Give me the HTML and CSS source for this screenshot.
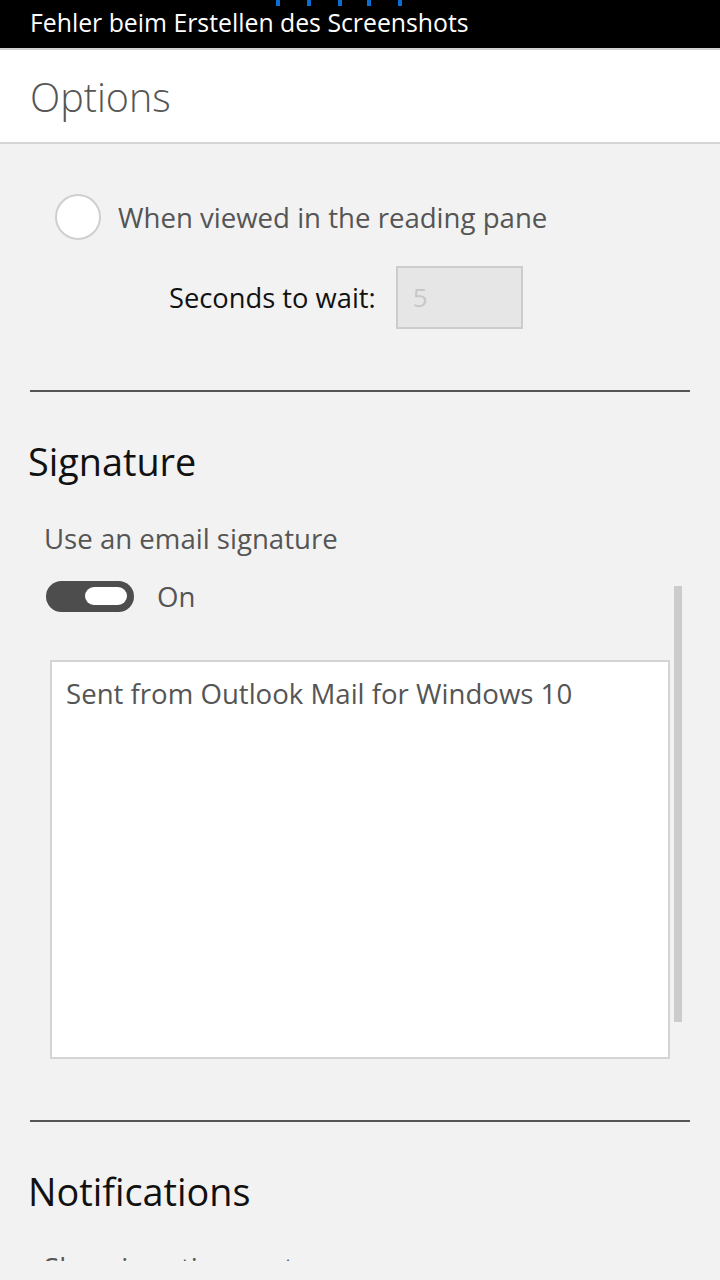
FILE: index.html
```html
<!DOCTYPE html>
<html lang="en">
<head>
    <meta charset="UTF-8">
    <meta name="viewport" content="width=device-width, initial-scale=1.0">
    <title>Options</title>
    <link rel="stylesheet" href="styles.css">
</head>
<body>
    <div class="statusbar">
        <span class="status-text">Fehler beim Erstellen des Screenshots</span>
        <div class="progress">
            <span></span><span></span><span></span><span></span><span></span>
        </div>
    </div>
    <div class="header">
        <h1 class="title">Options</h1>
    </div>
    <div class="content">
        <div class="scroll">
            <div class="radio-row">
                <span class="radio"></span>
                <span class="label">When viewed in the reading pane</span>
            </div>
            <div class="wait-row">
                <span class="wait-label">Seconds to wait:</span>
                <div class="wait-box">5</div>
            </div>
            <hr class="divider">
            <h2 class="section">Signature</h2>
            <div class="label indent">Use an email signature</div>
            <div class="toggle-row">
                <span class="toggle"><span class="knob"></span></span>
                <span class="label">On</span>
            </div>
            <div class="sig-box">Sent from Outlook Mail for Windows 10</div>
            <hr class="divider">
            <h2 class="section notif">Notifications</h2>
            <div class="label indent cut">Show in action center</div>
        </div>
        <div class="scrollbar"></div>
    </div>
</body>
</html>
```

FILE: styles.css
```css
body {
    margin: 0;
    width: 720px;
    height: 1280px;
    overflow: hidden;
    background: #F2F2F2;
    font-family: 'Open Sans', 'Noto Sans', sans-serif;
    color: #555;
}
.statusbar {
    position: relative;
    height: 48px;
    background: #000;
    border-bottom: 2px solid #D0D0D0;
    padding-left: 30px;
}
.status-text {
    display: block;
    color: #FFF;
    font-size: 24.8px;
    line-height: 44px;
}
.progress span {
    position: absolute;
    top: 0;
    width: 4px;
    height: 6px;
    background: #0A6FD0;
}
.progress span:nth-child(1) { left: 276px; }
.progress span:nth-child(2) { left: 307px; }
.progress span:nth-child(3) { left: 338px; }
.progress span:nth-child(4) { left: 367px; }
.progress span:nth-child(5) { left: 398px; }
.header {
    height: 92px;
    background: #FFF;
    border-bottom: 2px solid #D4D4D4;
    padding-left: 30px;
}
.title {
    margin: 0;
    font-weight: 300;
    font-size: 39.5px;
    line-height: 94px;
    color: #555;
}
.content {
    position: relative;
    height: 1117px;
    overflow: hidden;
}
.scroll {
    padding-top: 50px;
}
.radio-row {
    display: flex;
    align-items: center;
    gap: 17px;
    padding-left: 55px;
    height: 46px;
}
.radio {
    width: 42px;
    height: 42px;
    border: 2px solid #CFCFCF;
    border-radius: 50%;
    background: #FFF;
}
.label {
    font-size: 27.6px;
    line-height: 36px;
    color: #555;
}
.wait-row {
    display: flex;
    align-items: center;
    gap: 20px;
    margin-top: 26px;
    padding-left: 169px;
}
.wait-label {
    font-size: 27.3px;
    color: #111;
}
.wait-box {
    width: 108px;
    height: 59px;
    border: 2px solid #CCC;
    background: #E6E6E6;
    color: #C8C8C8;
    font-size: 26px;
    line-height: 59px;
    padding-left: 15px;
}
.divider {
    margin: 61px 30px 0;
    border: none;
    height: 2px;
    background: #555;
}
.section {
    margin: 45px 0 0 28px;
    font-weight: 400;
    font-size: 37.8px;
    line-height: 50px;
    color: #111;
}
.indent {
    margin-top: 33px;
    padding-left: 44px;
}
.toggle-row {
    display: flex;
    align-items: center;
    gap: 23px;
    margin-top: 22px;
    padding-left: 46px;
}
.toggle {
    display: flex;
    align-items: center;
    justify-content: flex-end;
    width: 88px;
    height: 31px;
    border-radius: 16px;
    background: #4D4D4D;
    padding-right: 7px;
    box-sizing: border-box;
}
.knob {
    width: 42px;
    height: 18px;
    border-radius: 9px;
    background: #FFF;
}
.sig-box {
    margin: 46px 0 0 50px;
    width: 620px;
    height: 399px;
    border: 2px solid #D4D4D4;
    background: #FFF;
    padding: 13px 0 0 14px;
    box-sizing: border-box;
    font-size: 27.6px;
    line-height: 36px;
    color: #555;
}
.notif {
    margin-top: 45px;
}
.cut {
    margin-top: 32px;
}
.scrollbar {
    position: absolute;
    left: 674px;
    top: 442px;
    width: 8px;
    height: 436px;
    background: #CCC;
}
```
